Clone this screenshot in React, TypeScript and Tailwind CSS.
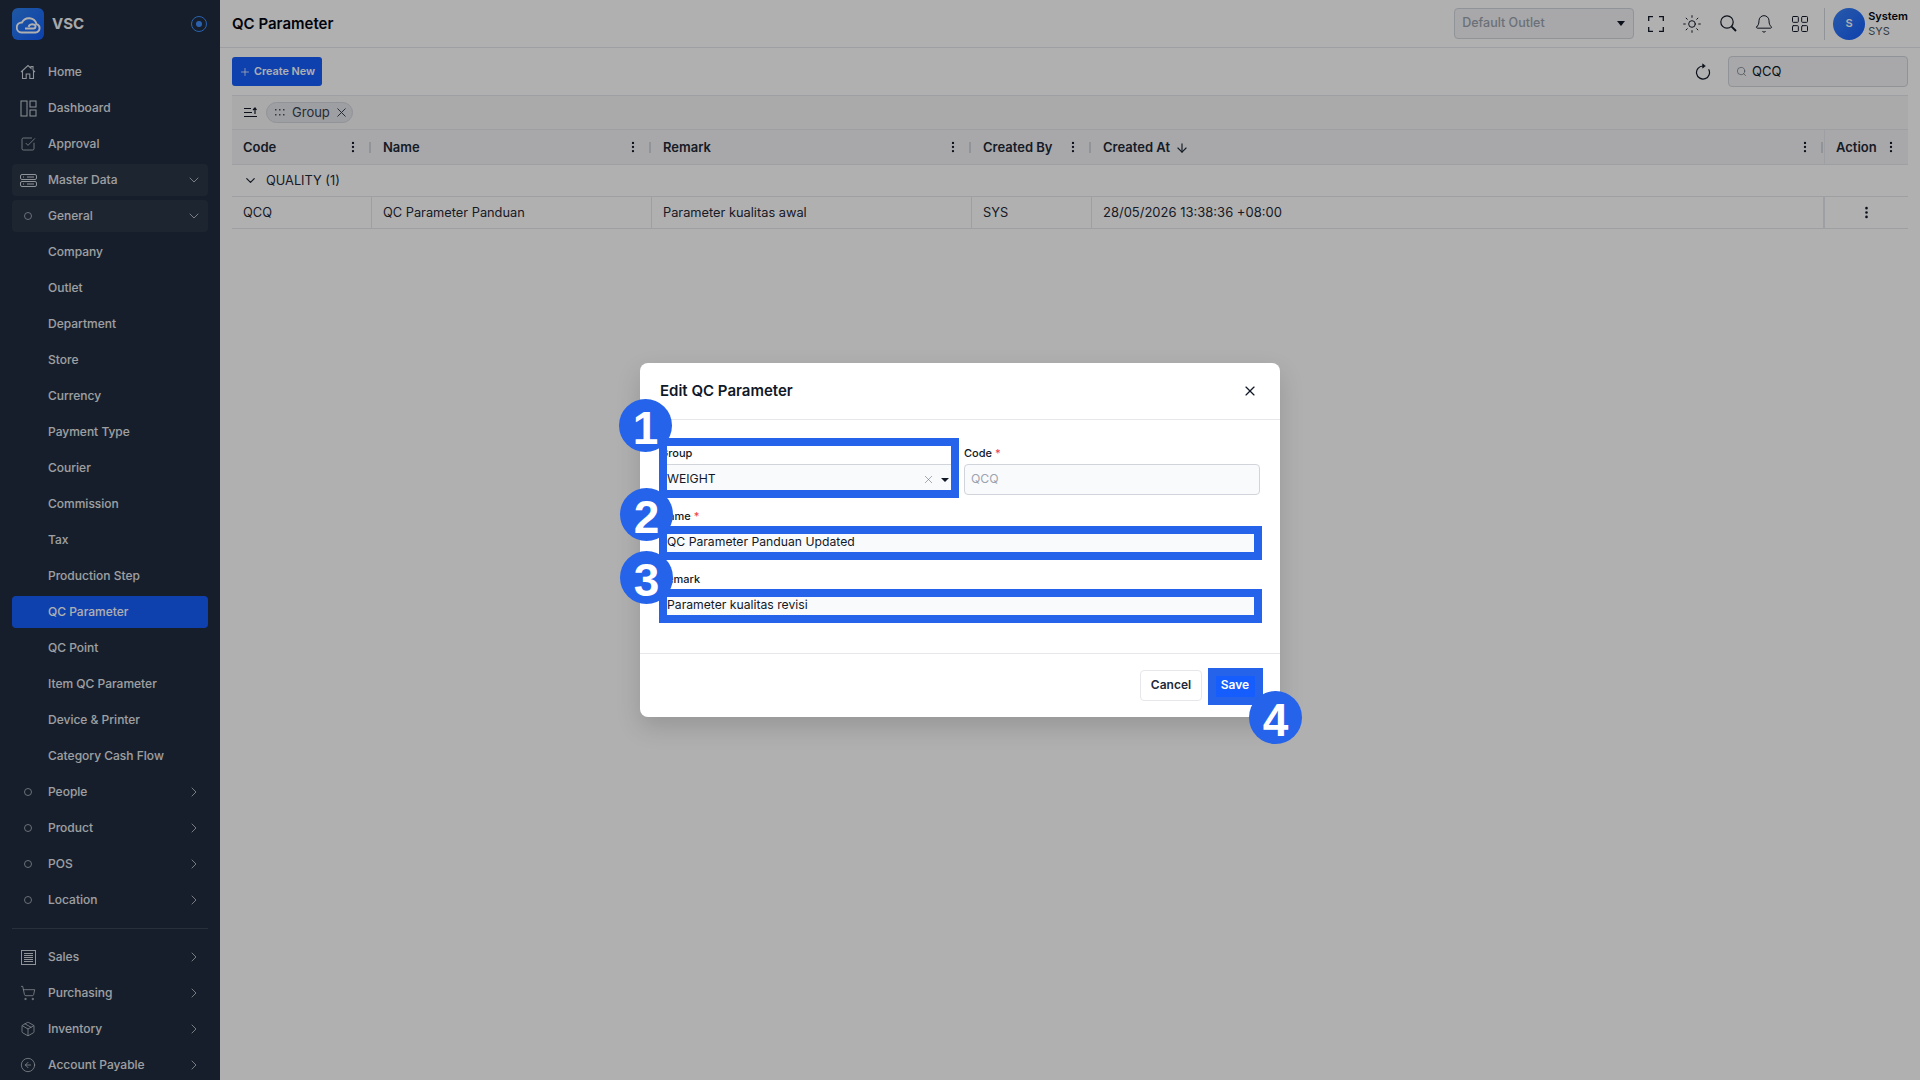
import { ReactNode } from "react";
import {
  ArrowDown,
  Bell,
  ChevronDown,
  ChevronRight,
  CircleArrowLeft,
  EllipsisVertical,
  LayoutGrid,
  Package,
  Plus,
  Search,
  ShoppingCart,
  SquareCheckBig,
  Sun,
  X,
} from "lucide-react";

function HomeIcon() {
  return (
    <svg width="16" height="16" viewBox="0 0 16 16" fill="none" stroke="currentColor" strokeWidth="1.1">
      <path d="M1 8 8 1.5l3 2.7V2.5h2v3.6L15 8" />
      <path d="M2.5 7v7.5h3.7v-4.5h3.6v4.5h3.7V7" />
    </svg>
  );
}

function DashboardIcon() {
  return (
    <svg width="17" height="17" viewBox="0 0 17 17" fill="none" stroke="currentColor" strokeWidth="1">
      <rect x="1" y="1" width="6" height="15" />
      <rect x="10" y="1" width="6" height="6" />
      <rect x="10" y="10" width="6" height="6" />
    </svg>
  );
}

function ServerIcon() {
  return (
    <svg width="17" height="13" viewBox="0 0 17 13" fill="none" stroke="currentColor" strokeWidth="1">
      <rect x="0.5" y="0.5" width="16" height="5" rx="1.5" />
      <rect x="0.5" y="7.5" width="16" height="5" rx="1.5" />
      <path d="M3 3h1M3 10h1M7 3h7M7 10h7" />
    </svg>
  );
}

function SalesIcon() {
  return (
    <svg width="15" height="15" viewBox="0 0 15 15" fill="none" stroke="currentColor" strokeWidth="1">
      <rect x="0.5" y="0.5" width="14" height="14" />
      <path d="M3 3.5h9M3 5.5h9M3 7.5h9M3 9.5h9M3 11.5h9" />
    </svg>
  );
}

function RefreshIcon() {
  return (
    <svg width="16" height="17" viewBox="0 0 16 17" fill="none" stroke="#111827" strokeWidth="1.2">
      <path d="M13.6 6.2A6.5 6.5 0 1 1 8 3" />
      <path d="M7.6.8 10.4 3 7.6 5.2Z" fill="#111827" strokeWidth="0.5" />
    </svg>
  );
}

function FullscreenIcon() {
  return (
    <svg width="16" height="16" viewBox="0 0 16 16" fill="none" stroke="currentColor" strokeWidth="1.3">
      <path d="M.7 5V.7H5M11 .7h4.3V5M15.3 11v4.3H11M5 15.3H.7V11" />
    </svg>
  );
}

function LensIcon() {
  return (
    <svg width="17" height="17" viewBox="0 0 17 17" fill="none" stroke="currentColor">
      <circle cx="7" cy="7" r="6.2" strokeWidth="1.2" />
      <path d="m11.6 11.6 4.4 4.4" strokeWidth="1.9" />
    </svg>
  );
}

function Dot() {
  return <span className="block h-[8px] w-[8px] rounded-full border border-[#9ca3af]" />;
}

type NavItem = {
  label: string;
  icon?: ReactNode;
  arrow?: "down" | "right";
  tint?: boolean;
  active?: boolean;
};

const thin = { size: 16, strokeWidth: 1.1 };

const NAV_TOP: NavItem[] = [
  { label: "Home", icon: <HomeIcon /> },
  { label: "Dashboard", icon: <DashboardIcon /> },
  { label: "Approval", icon: <SquareCheckBig {...thin} /> },
  { label: "Master Data", icon: <ServerIcon />, arrow: "down", tint: true },
  { label: "General", icon: <Dot />, arrow: "down", tint: true },
  { label: "Company" },
  { label: "Outlet" },
  { label: "Department" },
  { label: "Store" },
  { label: "Currency" },
  { label: "Payment Type" },
  { label: "Courier" },
  { label: "Commission" },
  { label: "Tax" },
  { label: "Production Step" },
  { label: "QC Parameter", active: true },
  { label: "QC Point" },
  { label: "Item QC Parameter" },
  { label: "Device & Printer" },
  { label: "Category Cash Flow" },
  { label: "People", icon: <Dot />, arrow: "right" },
  { label: "Product", icon: <Dot />, arrow: "right" },
  { label: "POS", icon: <Dot />, arrow: "right" },
  { label: "Location", icon: <Dot />, arrow: "right" },
];

const NAV_BOTTOM: NavItem[] = [
  { label: "Sales", icon: <SalesIcon />, arrow: "right" },
  { label: "Purchasing", icon: <ShoppingCart {...thin} />, arrow: "right" },
  { label: "Inventory", icon: <Package {...thin} />, arrow: "right" },
  { label: "Account Payable", icon: <CircleArrowLeft {...thin} />, arrow: "right" },
];

function NavRow({ item }: { item: NavItem }) {
  return (
    <div
      className={`flex h-[32px] shrink-0 items-center rounded-[4px] ${
        item.active ? "bg-[#155dfc] text-white" : item.tint ? "bg-[#2b3647] text-[#e5e7eb]" : "text-[#e5e7eb]"
      }`}
    >
      <span className="mr-[4px] flex w-[32px] shrink-0 justify-center text-[#d1d5db]">{item.icon}</span>
      <span className="flex-1 text-[12px] font-medium">{item.label}</span>
      {item.arrow === "down" && <ChevronDown size={16} strokeWidth={1.1} className="mr-[6px]" />}
      {item.arrow === "right" && <ChevronRight size={16} strokeWidth={1.1} className="mr-[6px]" />}
    </div>
  );
}

function Sidebar() {
  return (
    <aside className="flex h-screen w-[220px] shrink-0 flex-col overflow-hidden bg-[#1f2c3e] px-[12px]">
      <div className="flex h-[56px] shrink-0 items-start pt-[8px]">
        <div className="flex h-[32px] w-[32px] items-center justify-center rounded-[6px] bg-gradient-to-br from-[#2f80ed] to-[#155dfc]">
          <svg width="25" height="19" viewBox="0 0 25 19" fill="none" stroke="white" strokeWidth="1.9" strokeLinejoin="round">
            <path d="M5.5 17.5h14a4.3 4.3 0 0 0 1-8.4A7.8 7.8 0 0 0 6 7.5a5 5 0 0 0-.5 10Z" />
            <path d="M9 13.5h8.5a2 2 0 0 0 0-4 4 4 0 0 0-5 2.4" />
          </svg>
        </div>
        <span className="ml-[8px] mt-[4px] text-[15px] font-bold leading-[24px] text-[#f3f4f6]">VSC</span>
        <span className="ml-auto mr-[1px] mt-[8px] flex h-[16px] w-[16px] items-center justify-center rounded-full border border-[#3f8fff]">
          <span className="h-[6px] w-[6px] rounded-full bg-[#3f8fff]" />
        </span>
      </div>
      <nav className="flex flex-col gap-[4px]">
        {NAV_TOP.map((item) => (
          <NavRow key={item.label} item={item} />
        ))}
      </nav>
      <div className="mb-[12px] mt-[12px] border-t border-[#3a4657]" />
      <nav className="flex flex-col gap-[4px]">
        {NAV_BOTTOM.map((item) => (
          <NavRow key={item.label} item={item} />
        ))}
      </nav>
    </aside>
  );
}

function Topbar() {
  return (
    <header className="flex h-[48px] shrink-0 items-center border-b border-[#e5e7eb] pl-[12px] pr-[12px]">
      <h1 className="pt-[1px] text-[15px] font-semibold text-[#030712]">QC Parameter</h1>
      <div className="ml-auto flex h-[31px] w-[180px] items-center justify-between rounded-[4px] border border-[#d1d5db] bg-[#f3f4f6] pl-[7px] pr-[8px]">
        <span className="pb-[1px] text-[12.5px] font-medium text-[#9ca3af]">Default Outlet</span>
        <span className="h-0 w-0 border-x-[4px] border-t-[5px] border-x-transparent border-t-[#111827]" />
      </div>
      <div className="ml-[4px] flex items-center text-[#111827]">
        <span className="flex w-[36px] justify-center"><FullscreenIcon /></span>
        <span className="flex w-[36px] justify-center"><Sun size={20} strokeWidth={1.2} /></span>
        <span className="flex w-[36px] justify-center"><LensIcon /></span>
        <span className="flex w-[36px] justify-center"><Bell size={20} strokeWidth={1.2} /></span>
        <span className="flex w-[36px] justify-center"><LayoutGrid size={20} strokeWidth={1.2} /></span>
      </div>
      <div className="ml-[6px] h-[32px] border-l border-[#d1d5db]" />
      <div className="ml-[8px] flex h-[32px] w-[32px] items-center justify-center rounded-full bg-gradient-to-br from-[#3b82f6] to-[#155dfc] text-[11px] font-semibold text-white">
        S
      </div>
      <div className="ml-[3px] flex flex-col">
        <span className="text-[11px] font-semibold leading-[15px] text-[#030712]">System</span>
        <span className="text-[11px] leading-[15px] text-[#4b5563]">SYS</span>
      </div>
    </header>
  );
}

function ColHead({ label, width }: { label: ReactNode; width: string }) {
  return (
    <div className={`flex items-center pl-[11px] pt-[2px] ${width}`}>
      <span className="flex-1 text-[13px] font-semibold text-[#1f2937]">{label}</span>
      <EllipsisVertical size={14} strokeWidth={2} className="mb-[2px] mr-[9px] text-[#111827]" />
      <span className="mb-[2px] mr-[1px] h-[11px] w-[2px] bg-[#d1d5db]" />
    </div>
  );
}

function Cell({ children, width }: { children: ReactNode; width: string }) {
  return (
    <div className={`flex items-center border-r border-[#e5e7eb] pl-[11px] text-[12.8px] text-[#1f2937] ${width}`}>{children}</div>
  );
}

function Table() {
  return (
    <div className="mx-[12px] flex flex-col text-[13px]">
      <div className="flex h-[35px] items-center border-y border-[#e5e7eb] bg-[#f6f6f6] pl-[12px]">
        <svg width="13" height="11" viewBox="0 0 13 11" fill="none" stroke="#111827" strokeWidth="1.2">
          <path d="M0 1.5h7M0 5.5h8M0 9.5h13M9 3l2-2 1.5 2M11 1v6" />
        </svg>
        <div className="ml-[9px] flex h-[21px] items-center rounded-full border border-[#d1d5db] bg-[#e5e7eb] pl-[8px] pr-[3px] text-[#374151]">
          <svg width="11" height="7" viewBox="0 0 11 7" fill="#4b5563">
            <rect x="0" y="0" width="1.5" height="1.5" />
            <rect x="4" y="0" width="1.5" height="1.5" />
            <rect x="8" y="0" width="1.5" height="1.5" />
            <rect x="0" y="5" width="1.5" height="1.5" />
            <rect x="4" y="5" width="1.5" height="1.5" />
            <rect x="8" y="5" width="1.5" height="1.5" />
          </svg>
          <span className="ml-[6px]">Group</span>
          <X size={15} strokeWidth={1.6} className="ml-[4px]" />
        </div>
      </div>
      <div className="flex h-[35px] border-b border-[#e5e7eb] bg-[#f3f4f6]">
        <ColHead label="Code" width="w-[140px]" />
        <ColHead label="Name" width="w-[280px]" />
        <ColHead label="Remark" width="w-[320px]" />
        <ColHead label="Created By" width="w-[120px]" />
        <ColHead
          width="w-[732px]"
          label={
            <span className="flex items-center gap-[5px]">
              Created At
              <ArrowDown size={14} strokeWidth={2} />
            </span>
          }
        />
        <div className="flex flex-1 items-center border-l border-[#e5e7eb] pl-[11px] pt-[2px]">
          <span className="flex-1 text-[13px] font-semibold text-[#1f2937]">Action</span>
          <EllipsisVertical size={14} strokeWidth={2} className="mb-[2px] mr-[10px] text-[#111827]" />
        </div>
      </div>
      <div className="flex h-[32px] items-center border-b border-[#e5e7eb] pl-[11px] text-[12.8px] text-[#1f2937]">
        <ChevronDown size={15} strokeWidth={2} />
        <span className="ml-[8px]">QUALITY (1)</span>
      </div>
      <div className="flex h-[32px] border-b border-[#e5e7eb]">
        <Cell width="w-[140px]">QCQ</Cell>
        <Cell width="w-[280px]">QC Parameter Panduan</Cell>
        <Cell width="w-[320px]">Parameter kualitas awal</Cell>
        <Cell width="w-[120px]">SYS</Cell>
        <Cell width="w-[732px]"><span className="text-[13px]">28/05/2026 13:38:36 +08:00</span></Cell>
        <div className="flex flex-1 items-center justify-center border-l border-[#e5e7eb] text-[#111827]">
          <EllipsisVertical size={15} strokeWidth={2.25} />
        </div>
      </div>
    </div>
  );
}

function Field({ label, required, children }: { label: string; required?: boolean; children: ReactNode }) {
  return (
    <div className="flex flex-col">
      <label className="mb-[4px] h-[13px] text-[11px] font-medium leading-[13px] text-[#111827]">
        {label}
        {required && <span className="ml-[3px] text-[#ef4444]">*</span>}
      </label>
      {children}
    </div>
  );
}

function Box({ children, muted }: { children: ReactNode; muted?: boolean }) {
  return (
    <div
      className={`flex h-[31px] items-center rounded-[4px] border border-[#d1d5db] bg-[#f9fafb] pl-[6px] pr-[6px] text-[12.2px] ${
        muted ? "text-[#9ca3af]" : "text-[#111827]"
      }`}
    >
      {children}
    </div>
  );
}

function Badge({ n, className }: { n: number; className: string }) {
  return (
    <span
      className={`absolute flex h-[53px] w-[53px] items-center justify-center rounded-full bg-[#2563eb] pt-[4px] font-['Liberation_Sans',sans-serif] text-[46px] font-bold leading-none text-white ${className}`}
    >
      {n}
    </span>
  );
}

function EditModal() {
  return (
    <div className="absolute inset-0 flex items-center justify-center bg-black/[0.31]">
      <div className="relative h-[354px] w-[640px] rounded-[8px] bg-white shadow-[0_10px_25px_rgba(0,0,0,0.15)]">
        <div className="flex h-[57px] items-center justify-between border-b border-[#e5e7eb] pl-[20px] pr-[22px]">
          <h2 className="text-[15px] font-semibold text-[#111827]">Edit QC Parameter</h2>
          <X size={16} strokeWidth={1.75} className="text-[#111827]" />
        </div>
        <div className="flex h-[233px] flex-col gap-[15px] px-[20px] pt-[27px]">
          <div className="grid grid-cols-2 gap-[8px]">
            <Field label="Group">
              <Box>
                <span className="flex-1 pb-[1px]">WEIGHT</span>
                <X size={13} strokeWidth={1.1} className="text-[#6b7280]" />
                <span className="ml-[6px] h-0 w-0 border-x-[4px] border-t-[4px] border-x-transparent border-t-[#111827]" />
              </Box>
            </Field>
            <Field label="Code" required>
              <Box muted>QCQ</Box>
            </Field>
          </div>
          <Field label="Name" required>
            <Box>QC Parameter Panduan Updated</Box>
          </Field>
          <Field label="Remark">
            <Box>Parameter kualitas revisi</Box>
          </Field>
        </div>
        <div className="flex h-[64px] items-center justify-end gap-[8px] border-t border-[#e5e7eb] pb-[1px] pr-[20px]">
          <button className="h-[31px] w-[62px] rounded-[4px] border border-[#e5e7eb] text-[12px] font-semibold text-[#1f2937]">Cancel</button>
          <button className="h-[31px] w-[50px] rounded-[4px] bg-[#155dfc] text-[12px] font-semibold text-white">Save</button>
        </div>

        {/* tutorial marks drawn over the dialog */}
        <span className="absolute left-[19px] top-[75px] h-[60px] w-[300px] border-[8px] border-[#2563eb]" />
        <span className="absolute left-[19px] top-[163px] h-[34px] w-[603px] border-[8px] border-[#2563eb]" />
        <span className="absolute left-[19px] top-[226px] h-[34px] w-[603px] border-[8px] border-[#2563eb]" />
        <span className="absolute left-[568px] top-[305px] h-[37px] w-[55px] border-[8px] border-[#2563eb]" />
        <Badge n={1} className="left-[-21px] top-[36px]" />
        <Badge n={2} className="left-[-20px] top-[125px]" />
        <Badge n={3} className="left-[-20px] top-[188px]" />
        <Badge n={4} className="left-[609px] top-[328px]" />
      </div>
    </div>
  );
}

export default function App() {
  return (
    <div className="relative flex h-screen w-full overflow-hidden bg-white font-['Inter',sans-serif]">
      <Sidebar />
      <main className="flex min-w-0 flex-1 flex-col">
        <Topbar />
        <div className="flex h-[47px] shrink-0 items-center px-[12px]">
          <button className="flex h-[29px] w-[90px] items-center justify-center gap-[3px] rounded-[3px] bg-[#155dfc] pt-[1px] text-[10.8px] font-semibold text-white">
            <Plus size={12} strokeWidth={1.5} />
            Create New
          </button>
          <span className="ml-auto mr-[17px]"><RefreshIcon /></span>
          <div className="flex h-[31px] w-[180px] items-center rounded-[4px] border border-[#d1d5db] bg-[#f3f4f6] pl-[7px]">
            <Search size={11} strokeWidth={1.25} className="text-[#4b5563]" />
            <span className="ml-[5px] text-[13px] text-[#111827]">QCQ</span>
          </div>
        </div>
        <Table />
      </main>
      <EditModal />
    </div>
  );
}
